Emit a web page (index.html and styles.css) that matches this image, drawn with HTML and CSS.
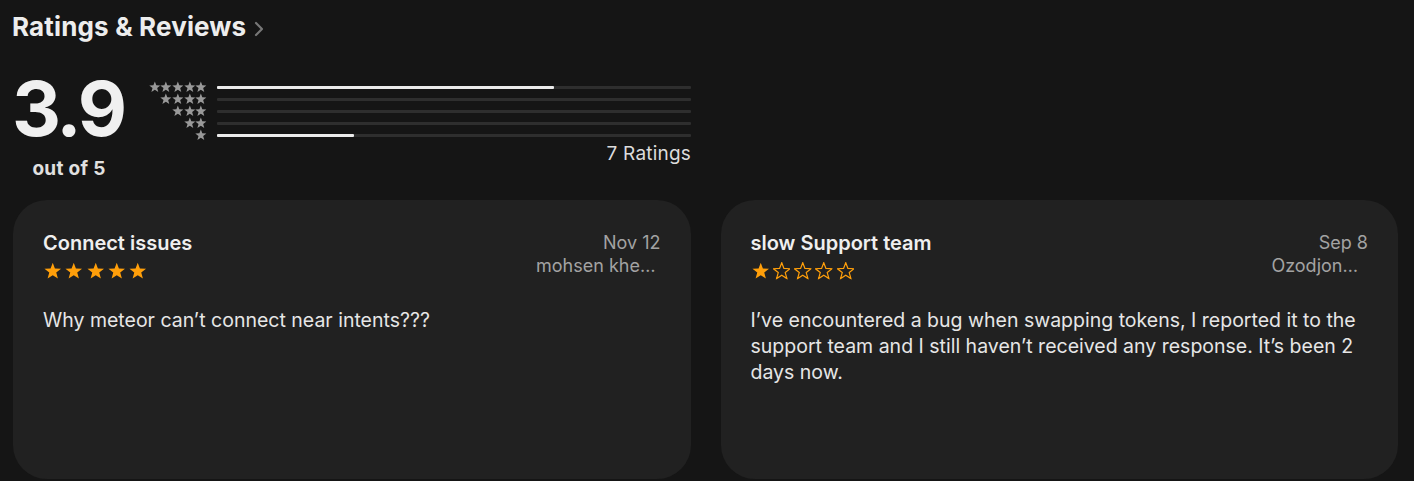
FILE: index.html
```html
<!DOCTYPE html>
<html lang="en">
<head>
<meta charset="utf-8">
<title>Ratings &amp; Reviews</title>
<link rel="stylesheet" href="styles.css">
</head>
<body>
<svg class="defs" width="0" height="0" aria-hidden="true">
  <defs>
    <symbol id="star" viewBox="0 0 20 20">
      <polygon points="10,0.8 12.47,7.40 19.51,7.71 13.99,12.10 15.88,18.89 10,15.0 4.12,18.89 6.01,12.10 0.49,7.71 7.53,7.40"/>
    </symbol>
  </defs>
</svg>
<main class="page">
  <header class="head">
    <h1 class="title">Ratings &amp; Reviews</h1>
    <svg class="chev" viewBox="0 0 10 16" aria-hidden="true"><polyline points="2,2 8,8 2,14"/></svg>
  </header>

  <section class="summary">
    <div class="score">
      <div class="score-num">3.9</div>
      <div class="score-sub">out of 5</div>
    </div>
    <div class="hist">
      <div class="hist-rows">
        <div class="hrow">
          <div class="hstars"><svg><use href="#star"/></svg><svg><use href="#star"/></svg><svg><use href="#star"/></svg><svg><use href="#star"/></svg><svg><use href="#star"/></svg></div>
          <div class="track"><div class="fill" style="width:71%"></div></div>
        </div>
        <div class="hrow">
          <div class="hstars"><svg><use href="#star"/></svg><svg><use href="#star"/></svg><svg><use href="#star"/></svg><svg><use href="#star"/></svg></div>
          <div class="track"><div class="fill" style="width:0%"></div></div>
        </div>
        <div class="hrow">
          <div class="hstars"><svg><use href="#star"/></svg><svg><use href="#star"/></svg><svg><use href="#star"/></svg></div>
          <div class="track"><div class="fill" style="width:0%"></div></div>
        </div>
        <div class="hrow">
          <div class="hstars"><svg><use href="#star"/></svg><svg><use href="#star"/></svg></div>
          <div class="track"><div class="fill" style="width:0%"></div></div>
        </div>
        <div class="hrow">
          <div class="hstars"><svg><use href="#star"/></svg></div>
          <div class="track"><div class="fill" style="width:29%"></div></div>
        </div>
      </div>
      <div class="count">7 Ratings</div>
    </div>
  </section>

  <section class="cards">
    <article class="card">
      <div class="card-top">
        <div class="card-left">
          <h2 class="card-title">Connect issues</h2>
          <div class="rstars">
            <svg class="on"><use href="#star"/></svg><svg class="on"><use href="#star"/></svg><svg class="on"><use href="#star"/></svg><svg class="on"><use href="#star"/></svg><svg class="on"><use href="#star"/></svg>
          </div>
        </div>
        <div class="card-right">
          <div class="date">Nov 12</div>
          <div class="author">mohsen khe…</div>
        </div>
      </div>
      <p class="body">Why meteor can’t connect near intents???</p>
    </article>

    <article class="card">
      <div class="card-top">
        <div class="card-left">
          <h2 class="card-title">slow Support team</h2>
          <div class="rstars">
            <svg class="on"><use href="#star"/></svg><svg class="off"><use href="#star"/></svg><svg class="off"><use href="#star"/></svg><svg class="off"><use href="#star"/></svg><svg class="off"><use href="#star"/></svg>
          </div>
        </div>
        <div class="card-right">
          <div class="date">Sep 8</div>
          <div class="author author-short">Ozodjon…</div>
        </div>
      </div>
      <p class="body">I’ve encountered a bug when swapping tokens, I reported it to the support team and I still haven’t received any response. It’s been 2 days now.</p>
    </article>
  </section>
</main>
</body>
</html>
```

FILE: styles.css
```css
* { box-sizing: border-box; }

html, body {
  margin: 0;
  padding: 0;
  background: #151515;
  color: #ebebeb;
  font-family: Inter, "Noto Sans", "Liberation Sans", sans-serif;
  overflow: hidden;
}

.defs { position: absolute; width: 0; height: 0; }

.page {
  padding: 12px 16px 0 13px;
}

.head {
  display: flex;
  align-items: center;
  gap: 8px;
  height: 30px;
  margin-left: -1px;
}

.title {
  margin: 0;
  font-size: 26px;
  line-height: 30px;
  font-weight: 700;
  letter-spacing: 0.15px;
  color: #ededed;
}

.chev {
  width: 10px;
  height: 16px;
  margin-top: 3px;
  fill: none;
  stroke: #777777;
  stroke-width: 2.2;
  stroke-linecap: round;
  stroke-linejoin: round;
}

.summary {
  display: flex;
  width: 678px;
  margin-top: 28px;
  height: 130px;
}

.score {
  display: flex;
  flex-direction: column;
  align-items: center;
  width: 112px;
}

.score-num {
  font-size: 76px;
  font-weight: 700;
  line-height: 76px;
  letter-spacing: -3px;
  margin-left: -2px;
  color: #f0f0f0;
}

.score-sub {
  margin-top: 11px;
  font-size: 19px;
  line-height: 23px;
  font-weight: 700;
  letter-spacing: 0.3px;
  color: #e0e0e0;
}

.hist {
  flex: 1;
  margin-left: 12px;
  display: flex;
  flex-direction: column;
  padding-top: 11px;
}

.hrow {
  display: flex;
  align-items: center;
  height: 12px;
}

.hstars {
  width: 70px;
  display: flex;
  justify-content: flex-end;
}

.hstars svg {
  width: 11.7px;
  height: 11.7px;
  fill: #999999;
}

.track {
  flex: 1;
  margin-left: 10px;
  height: 3px;
  background: #2e2e2e;
  border-radius: 1px;
}

.fill {
  height: 100%;
  background: #ebebeb;
  border-radius: 1px;
}

.count {
  margin-top: 1px;
  text-align: right;
  font-size: 19px;
  line-height: 23px;
  letter-spacing: 0.2px;
  color: #dcdcdc;
}

.cards {
  display: grid;
  grid-template-columns: 1fr 1fr;
  gap: 30px;
}

.card {
  background: #212121;
  border-radius: 34px;
  height: 279px;
  padding: 32px 30px 0 30px;
}

.card-top {
  display: flex;
  justify-content: space-between;
}

.card-title {
  margin: 0;
  font-size: 20px;
  font-weight: 600;
  line-height: 22px;
  color: #efefef;
}

.rstars {
  display: flex;
  gap: 3.8px;
  margin-top: 8px;
  margin-left: 1px;
}

.rstars svg {
  width: 17.5px;
  height: 17.5px;
}

.rstars .on { fill: #ff9f0a; }

.rstars .off {
  fill: none;
  stroke: #ff9f0a;
  stroke-width: 1.4;
}

.card-right {
  display: flex;
  flex-direction: column;
  align-items: flex-end;
}

.date {
  font-size: 18px;
  line-height: 22px;
  color: #a3a3a3;
}

.author {
  margin-top: 1px;
  margin-right: 5px;
  font-size: 18px;
  line-height: 22px;
  color: #a3a3a3;
}

.author-short {
  margin-right: 10px;
}

.body {
  margin: 27px 0 0;
  font-size: 19.5px;
  line-height: 26px;
  color: #e6e6e6;
}
```
